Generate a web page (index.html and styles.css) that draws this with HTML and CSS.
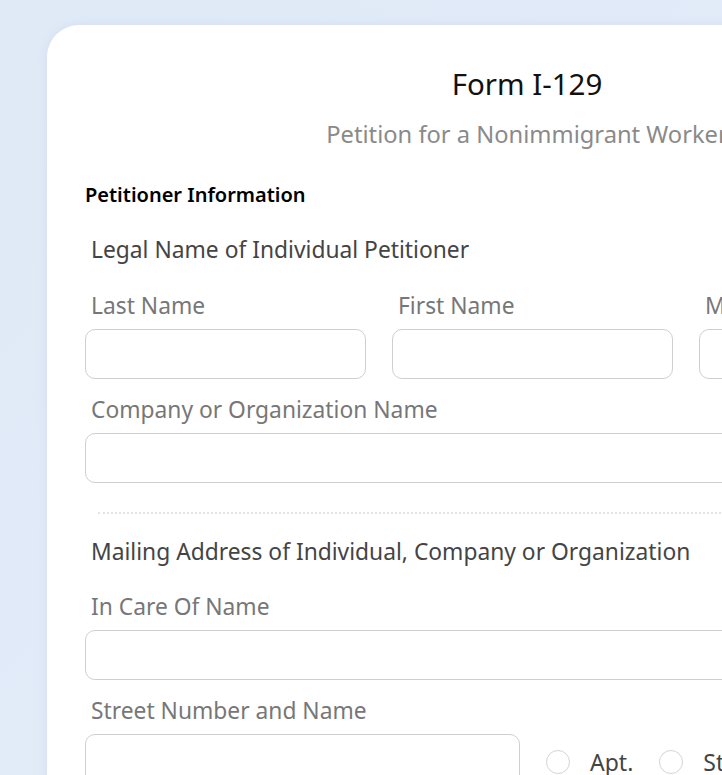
FILE: index.html
```html
<!DOCTYPE html>
<html lang="en">
<head>
    <meta charset="UTF-8">
    <meta name="viewport" content="width=device-width, initial-scale=1.0">
    <title>Form I-129</title>
    <link rel="stylesheet" href="styles.css">
</head>
<body>
    <div class="card">
        <div class="header">
            <h1>Form I-129</h1>
            <p class="subtitle">Petition for a Nonimmigrant Worker</p>
        </div>

        <h2 class="section-title">Petitioner Information</h2>

        <div class="group">
            <h3 class="group-title">Legal Name of Individual Petitioner</h3>
            <div class="name-row">
                <div class="field">
                    <label for="lastName">Last Name</label>
                    <input type="text" id="lastName">
                </div>
                <div class="field">
                    <label for="firstName">First Name</label>
                    <input type="text" id="firstName">
                </div>
                <div class="field">
                    <label for="middleName">Middle Name</label>
                    <input type="text" id="middleName">
                </div>
            </div>
            <div class="field">
                <label for="company">Company or Organization Name</label>
                <input type="text" id="company">
            </div>
        </div>

        <hr class="divider">

        <div class="group">
            <h3 class="group-title">Mailing Address of Individual, Company or Organization</h3>
            <div class="field">
                <label for="careOf">In Care Of Name</label>
                <input type="text" id="careOf">
            </div>
            <div class="field">
                <label for="street">Street Number and Name</label>
                <div class="street-row">
                    <input type="text" id="street" class="street">
                    <label class="radio"><input type="radio" name="unit"> Apt.</label>
                    <label class="radio"><input type="radio" name="unit"> Ste.</label>
                    <label class="radio"><input type="radio" name="unit"> Flr.</label>
                </div>
            </div>
        </div>
    </div>
</body>
</html>
```

FILE: styles.css
```css
html, body {
    overflow: hidden;
}
body {
    font-family: "Noto Sans", Lato, sans-serif;
    margin: 0;
    padding: 25px 0 0 47px;
    background: linear-gradient(135deg, #e0eaf7, #e3ecfa);
    min-height: 775px;
    box-sizing: border-box;
}
.card {
    width: 960px;
    background-color: #fff;
    border-radius: 32px;
    box-shadow: 0 0 12px rgba(120,140,180,0.12);
    padding: 39px 38px 40px 38px;
    box-sizing: border-box;
}
.header {
    text-align: center;
}
h1 {
    font-size: 29.5px;
    font-weight: 400;
    margin: 0;
    color: #111;
    line-height: 40px;
}
.subtitle {
    font-size: 23.7px;
    color: #8a8a8a;
    margin: 15px 0 0;
    line-height: 30px;
}
.section-title {
    font-size: 20px;
    font-weight: 600;
    margin: 31px 0 0;
    line-height: 30px;
    color: #000;
}
.group-title {
    font-size: 22.8px;
    font-weight: 400;
    color: #444;
    margin: 25px 0 10px 6px;
    line-height: 30px;
}
.divider + .group .group-title {
    margin-top: 23px;
    margin-bottom: 9px;
}
.name-row {
    display: grid;
    grid-template-columns: 281px 281px 281px;
    gap: 26px;
}
.field {
    display: flex;
    flex-direction: column;
}
.field label {
    font-size: 22.8px;
    color: #777;
    margin: 11px 0 0 6px;
    line-height: 40px;
}
input[type="text"] {
    height: 50px;
    border: 1px solid #cfcfcf;
    border-radius: 10px;
    box-sizing: border-box;
    margin-top: 3px;
    width: 100%;
}
.divider {
    border: none;
    border-top: 2px dotted #e4e4e4;
    margin: 29px 0 0 13px;
}
.street-row {
    display: flex;
    align-items: flex-start;
    gap: 26px;
}
.street-row .street {
    width: 435px;
    flex: none;
}
.field .radio {
    margin: 16px 0 0;
    display: flex;
    align-items: center;
    gap: 20px;
    color: #444;
    font-size: 23px;
    line-height: 30px;
}
.radio input {
    appearance: none;
    width: 24px;
    height: 24px;
    border: 1px solid #d4d4d4;
    border-radius: 50%;
    margin: 0;
}
```
